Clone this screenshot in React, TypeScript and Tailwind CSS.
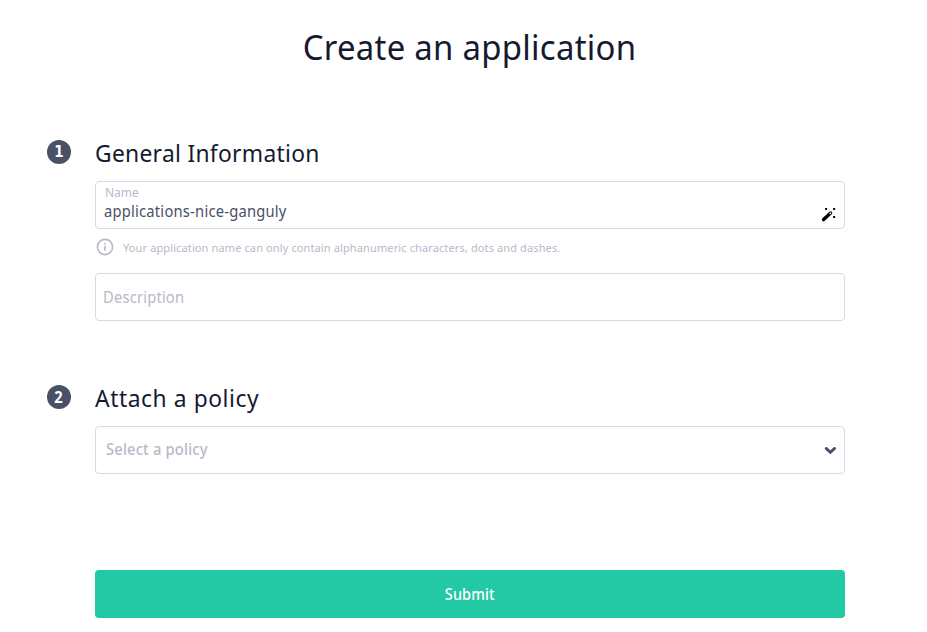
import React from "react";

function Step({
  n,
  digitClass,
  title,
  titleClass,
  children,
}: {
  n: number;
  digitClass: string;
  title: string;
  titleClass: string;
  children: React.ReactNode;
}) {
  return (
    <section className="flex gap-6">
      <div className="mt-[2px] flex h-6 w-6 shrink-0 items-center justify-center rounded-full bg-[#4a5066] leading-none font-bold text-white">
        <span className={digitClass}>{n}</span>
      </div>
      <div className="w-[750px]">
        <h2
          className={`mb-[13px] h-[30px] origin-left scale-x-95 text-[24px] leading-[30px] whitespace-nowrap text-[#151a30] ${titleClass}`}
        >
          {title}
        </h2>
        {children}
      </div>
    </section>
  );
}

export default function App() {
  return (
    <main className="h-[632px] w-[927px] overflow-hidden bg-white pl-[47px] font-['Noto_Sans',sans-serif]">
      <h1 className="ml-12 w-[750px] pt-[26px] text-center text-[35px] leading-[42px] whitespace-nowrap text-[#151a30]">
        <span className="inline-block scale-x-94 tracking-[0.3px]">Create an application</span>
      </h1>

      <div className="mt-[70px]">
        <Step
          n={1}
          digitClass="font-['DejaVu_Sans_Condensed','DejaVu_Sans',sans-serif] text-[15px]"
          title="General Information"
          titleClass="tracking-[0.32px]"
        >
          <div className="flex h-12 justify-between rounded-[4px] border border-[#d5d9e8] pr-[7px] pl-2">
            <div>
              <div className="mt-[3px] h-4 pl-[1px] text-[12px] leading-4 text-[#b6bac9]">Name</div>
              <div className="h-5 text-[16px] leading-5 text-[#4a5066]">
                <span className="inline-block origin-left scale-x-92 tracking-[0.24px]">applications-nice-ganguly</span>
              </div>
            </div>
            <svg className="mt-[25px] h-4 w-4" viewBox="0 0 16 16">
              <path d="M2.6 12.6 L9.6 6" stroke="#000" strokeWidth="3.4" strokeLinecap="round" />
              <path d="M8.9 6.7 L9.7 6" stroke="#fff" strokeWidth="1.2" strokeLinecap="round" />
              <path d="M4.1 1.1h2v2h-2zM12.1 1.1h2v2h-2zM12.1 9.1h2v2h-2z" />
            </svg>
          </div>
          <div className="flex h-11 items-start pt-[9px] pl-[1px] text-[#b6bac9]">
            <svg className="h-[18px] w-[18px]" viewBox="0 0 18 18" fill="none" stroke="currentColor">
              <circle cx="9" cy="9" r="7.6" strokeWidth="1.6" />
              <path d="M9 7.8v5M9 4.8v1.6" strokeWidth="1.7" />
            </svg>
            <span className="mt-px ml-[9px] text-[11px] leading-[18px] tracking-[0.12px] whitespace-nowrap">
              Your application name can only contain alphanumeric characters, dots and dashes.
            </span>
          </div>
          <div className="flex h-12 items-center rounded-[4px] border border-[#d5d9e8] pl-[7px] text-[16px] text-[#b6bac9]">
            <span className="origin-left scale-x-92 tracking-[0.2px]">Description</span>
          </div>
        </Step>
      </div>

      <div className="mt-[62px]">
        <Step n={2} digitClass="scale-x-92 text-[16px]" title="Attach a policy" titleClass="tracking-[0.6px]">
          <div className="flex h-12 items-center justify-between rounded-[4px] border border-[#d5d9e8] pr-2 pl-[10px] text-[16px] text-[#b6bac9]">
            <span className="-mt-[2px] origin-left scale-x-92 font-medium tracking-[0.2px]">Select a policy</span>
            <svg className="h-3 w-3" viewBox="0 0 12 12" fill="none" stroke="#4a5066" strokeWidth="2.8" strokeLinecap="round">
              <path d="M2.2 4.4 L6.4 8.3 L10.6 4.4" />
            </svg>
          </div>
        </Step>
      </div>

      <button className="mt-24 ml-12 flex h-12 w-[750px] items-center justify-center rounded-[4px] bg-[#23c8a4] text-[16px] font-medium text-white">
        <span className="scale-x-90 tracking-[0.2px]">Submit</span>
      </button>
    </main>
  );
}
